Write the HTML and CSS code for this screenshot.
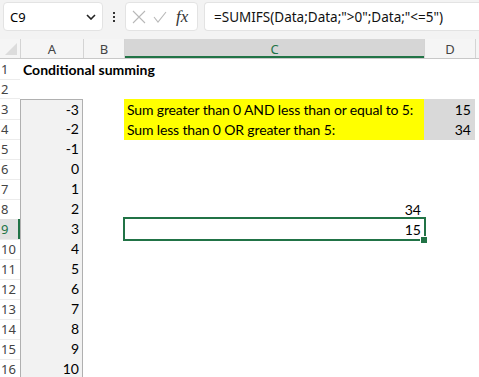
FILE: index.html
```html
<!DOCTYPE html>
<html lang="en">
<head>
  <meta charset="UTF-8">
  <title>Conditional summing</title>
  <link rel="stylesheet" href="styles.css">
</head>
<body>
  <div class="formula-bar">
    <div class="name-box">
      <span>C9</span>
      <svg class="chevron" width="10" height="6" viewBox="0 0 10 6"><path d="M1 1 L5 5 L9 1" fill="none" stroke="#222" stroke-width="1.6"/></svg>
    </div>
    <div class="dots"><i></i><i></i><i></i></div>
    <div class="fx-box">
      <svg width="14" height="14" viewBox="0 0 14 14"><path d="M1 1 L13 13 M13 1 L1 13" stroke="#b8b8b8" stroke-width="1.1" fill="none"/></svg>
      <svg width="14" height="14" viewBox="0 0 14 14"><path d="M1 7 L5 12 L13 2" stroke="#b8b8b8" stroke-width="1.1" fill="none"/></svg>
      <span class="fx">fx</span>
    </div>
    <div class="formula-box">=SUMIFS(Data;Data;"&gt;0";Data;"&lt;=5")</div>
  </div>

  <div class="sheet">
    <div class="row head">
      <div class="corner"><svg width="14" height="14" viewBox="0 0 14 14"><path d="M13 1 L13 13 L1 13 Z" fill="#dcdcdc"/></svg></div>
      <div class="col-head">A</div>
      <div class="col-head">B</div>
      <div class="col-head active">C</div>
      <div class="col-head">D</div>
      <div class="col-head"></div>
    </div>
    <div class="row">
      <div class="row-head">1</div>
      <div class="cell title">Conditional summing</div>
      <div class="cell"></div><div class="cell"></div><div class="cell"></div><div class="cell"></div>
    </div>
    <div class="row">
      <div class="row-head">2</div>
      <div class="cell"></div><div class="cell"></div><div class="cell"></div><div class="cell"></div><div class="cell"></div>
    </div>
    <div class="row">
      <div class="row-head">3</div>
      <div class="cell data">-3</div><div class="cell"></div>
      <div class="cell label">Sum greater than 0 AND less than or equal to 5:</div>
      <div class="cell result">15</div><div class="cell"></div>
    </div>
    <div class="row">
      <div class="row-head">4</div>
      <div class="cell data">-2</div><div class="cell"></div>
      <div class="cell label">Sum less than 0 OR greater than 5:</div>
      <div class="cell result">34</div><div class="cell"></div>
    </div>
    <div class="row">
      <div class="row-head">5</div>
      <div class="cell data">-1</div><div class="cell"></div><div class="cell"></div><div class="cell"></div><div class="cell"></div>
    </div>
    <div class="row">
      <div class="row-head">6</div>
      <div class="cell data">0</div><div class="cell"></div><div class="cell"></div><div class="cell"></div><div class="cell"></div>
    </div>
    <div class="row">
      <div class="row-head">7</div>
      <div class="cell data">1</div><div class="cell"></div><div class="cell"></div><div class="cell"></div><div class="cell"></div>
    </div>
    <div class="row">
      <div class="row-head">8</div>
      <div class="cell data">2</div><div class="cell"></div><div class="cell num">34</div><div class="cell"></div><div class="cell"></div>
    </div>
    <div class="row">
      <div class="row-head selected">9</div>
      <div class="cell data">3</div><div class="cell"></div><div class="cell num current">15</div><div class="cell"></div><div class="cell"></div>
    </div>
    <div class="row">
      <div class="row-head">10</div>
      <div class="cell data">4</div><div class="cell"></div><div class="cell"></div><div class="cell"></div><div class="cell"></div>
    </div>
    <div class="row">
      <div class="row-head">11</div>
      <div class="cell data">5</div><div class="cell"></div><div class="cell"></div><div class="cell"></div><div class="cell"></div>
    </div>
    <div class="row">
      <div class="row-head">12</div>
      <div class="cell data">6</div><div class="cell"></div><div class="cell"></div><div class="cell"></div><div class="cell"></div>
    </div>
    <div class="row">
      <div class="row-head">13</div>
      <div class="cell data">7</div><div class="cell"></div><div class="cell"></div><div class="cell"></div><div class="cell"></div>
    </div>
    <div class="row">
      <div class="row-head">14</div>
      <div class="cell data">8</div><div class="cell"></div><div class="cell"></div><div class="cell"></div><div class="cell"></div>
    </div>
    <div class="row">
      <div class="row-head">15</div>
      <div class="cell data">9</div><div class="cell"></div><div class="cell"></div><div class="cell"></div><div class="cell"></div>
    </div>
    <div class="row">
      <div class="row-head">16</div>
      <div class="cell data">10</div><div class="cell"></div><div class="cell"></div><div class="cell"></div><div class="cell"></div>
    </div>
  </div>
</body>
</html>
```

FILE: styles.css
```css
:root {
  --bar-bg: #f3f3f3;
  --head-bg: #f5f5f5;
  --head-line: #d4d4d4;
  --excel-green: #217346;
  --data-fill: #f2f2f2;
  --data-line: #b0b0b0;
}

body {
  margin: 0;
  background: #fff;
  font-family: 'Lato', 'Liberation Sans', sans-serif;
  color: #000;
  overflow: hidden;
}

/* formula bar */
.formula-bar {
  display: flex;
  align-items: flex-start;
  height: 39px;
  padding: 2px 0 0 3px;
  box-sizing: border-box;
  background: var(--bar-bg);
  font-family: 'Noto Sans', 'Open Sans', sans-serif;
  font-size: 13px;
}

.name-box {
  width: 100px;
  height: 29px;
  box-sizing: border-box;
  display: flex;
  align-items: center;
  justify-content: space-between;
  padding: 0 6px 0 6px;
  background: #fff;
  border: 1px solid #e3e3e3;
  border-radius: 4px;
}

.chevron {
  margin-top: 1px;
}

.dots {
  width: 22px;
  height: 29px;
  display: flex;
  flex-direction: column;
  align-items: center;
  justify-content: center;
  gap: 2px;
}

.dots i {
  width: 2px;
  height: 2px;
  background: #333;
}

.fx-box {
  width: 73px;
  height: 29px;
  box-sizing: border-box;
  display: flex;
  align-items: center;
  gap: 7px;
  padding-left: 6px;
  background: #fff;
  border: 1px solid #e3e3e3;
  border-radius: 4px;
}

.fx {
  margin-left: 2px;
  font-family: 'Liberation Serif', serif;
  font-style: italic;
  font-size: 17px;
  color: #333;
}

.formula-box {
  flex: 1;
  height: 29px;
  box-sizing: border-box;
  margin-left: 6px;
  padding-left: 9px;
  display: flex;
  align-items: center;
  background: #fff;
  border: 1px solid #e3e3e3;
  border-right: none;
  border-radius: 4px 0 0 4px;
  font-size: 13.5px;
  color: #111;
}

/* sheet grid */
.row {
  display: grid;
  grid-template-columns: 20px 63px 41px 300px 51px 1fr;
  height: 20px;
}

.row.head {
  box-sizing: border-box;
  background: var(--head-bg);
  border-bottom: 1px solid #c8c8c8;
  font-family: 'Noto Sans', 'Open Sans', sans-serif;
  font-size: 13px;
  color: #444;
}

.corner {
  display: flex;
  align-items: flex-end;
  justify-content: flex-end;
  padding: 0 2px 2px 0;
}

.col-head {
  display: flex;
  align-items: center;
  justify-content: center;
  border-left: 1px solid var(--head-line);
}

.col-head.active {
  background: #d6d6d6;
  color: var(--excel-green);
  box-shadow: inset 0 -2px 0 var(--excel-green);
}

.row-head {
  display: flex;
  align-items: center;
  padding-left: 1px;
  font-family: 'Noto Sans', 'Open Sans', sans-serif;
  font-size: 13px;
  color: #444;
  border-bottom: 1px solid #ececec;
}

.row-head.selected {
  background: #e1e1e1;
  color: var(--excel-green);
  box-shadow: inset -2px 0 0 var(--excel-green);
}

.cell {
  position: relative;
  font-size: 14px;
  line-height: 21px;
  white-space: nowrap;
}

.title {
  font-weight: bold;
  padding-left: 3px;
}

.data {
  background: var(--data-fill);
  border: 1px solid var(--data-line);
  border-top: none;
  text-align: right;
  padding-right: 3px;
  line-height: 20px;
}

.row:nth-child(4) .data {
  border-top: 1px solid var(--data-line);
  line-height: 19px;
}

.label {
  background: #ffff00;
  padding-left: 3px;
  letter-spacing: -0.15px;
}

.result {
  background: #d9d9d9;
  text-align: right;
  padding-right: 4px;
}

.num {
  text-align: right;
  padding-right: 3px;
}

.current::before {
  content: '';
  position: absolute;
  left: -1px;
  top: -2px;
  right: -2px;
  bottom: -1px;
  border: 2px solid var(--excel-green);
}

.current::after {
  content: '';
  position: absolute;
  right: -4px;
  bottom: -4px;
  width: 6px;
  height: 6px;
  background: var(--excel-green);
  border: 1px solid #fff;
}
```
